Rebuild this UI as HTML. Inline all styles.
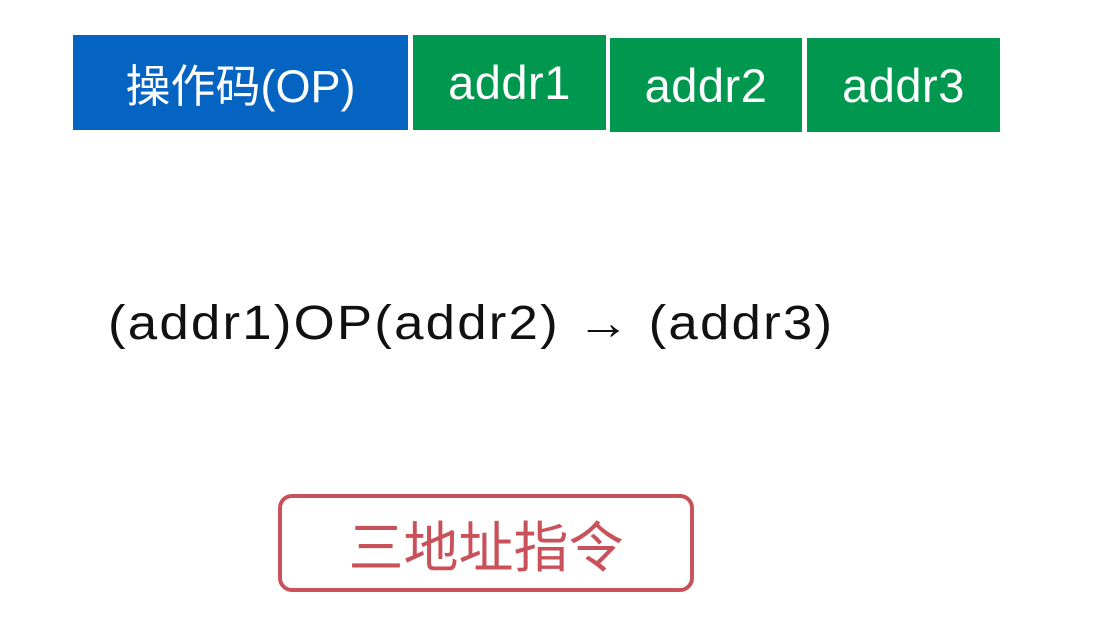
<!DOCTYPE html>
<html><head><meta charset="utf-8"><style>
body{margin:0;width:1115px;height:632px;background:#fff;position:relative;overflow:hidden;font-family:"Liberation Sans","Noto Sans CJK SC",sans-serif}
.b{position:absolute;color:#fff;font-size:47px;display:flex;align-items:center;justify-content:center;letter-spacing:0.5px}
</style></head><body>
<div class="b" style="left:73px;top:35px;width:335px;height:95px;background:#0563c1;font-size:45px;letter-spacing:0">操作码(OP)</div>
<div class="b" style="left:413px;top:35px;width:193px;height:95px;background:#00984f">addr1</div>
<div class="b" style="left:610px;top:38px;width:192px;height:94px;background:#00984f">addr2</div>
<div class="b" style="left:807px;top:38px;width:193px;height:94px;background:#00984f">addr3</div>
<div style="position:absolute;left:108px;top:296px;font-size:48px;letter-spacing:2px;color:#111;white-space:nowrap;transform:scaleX(1.1);transform-origin:0 0">(addr1)OP(addr2) <b>→</b> (addr3)</div>
<div style="position:absolute;left:278px;top:494px;width:408px;height:90px;border:4px solid #c9525a;border-radius:14px;display:flex;align-items:center;justify-content:center;color:#c9525a;font-size:55px">三地址指令</div>
</body></html>
